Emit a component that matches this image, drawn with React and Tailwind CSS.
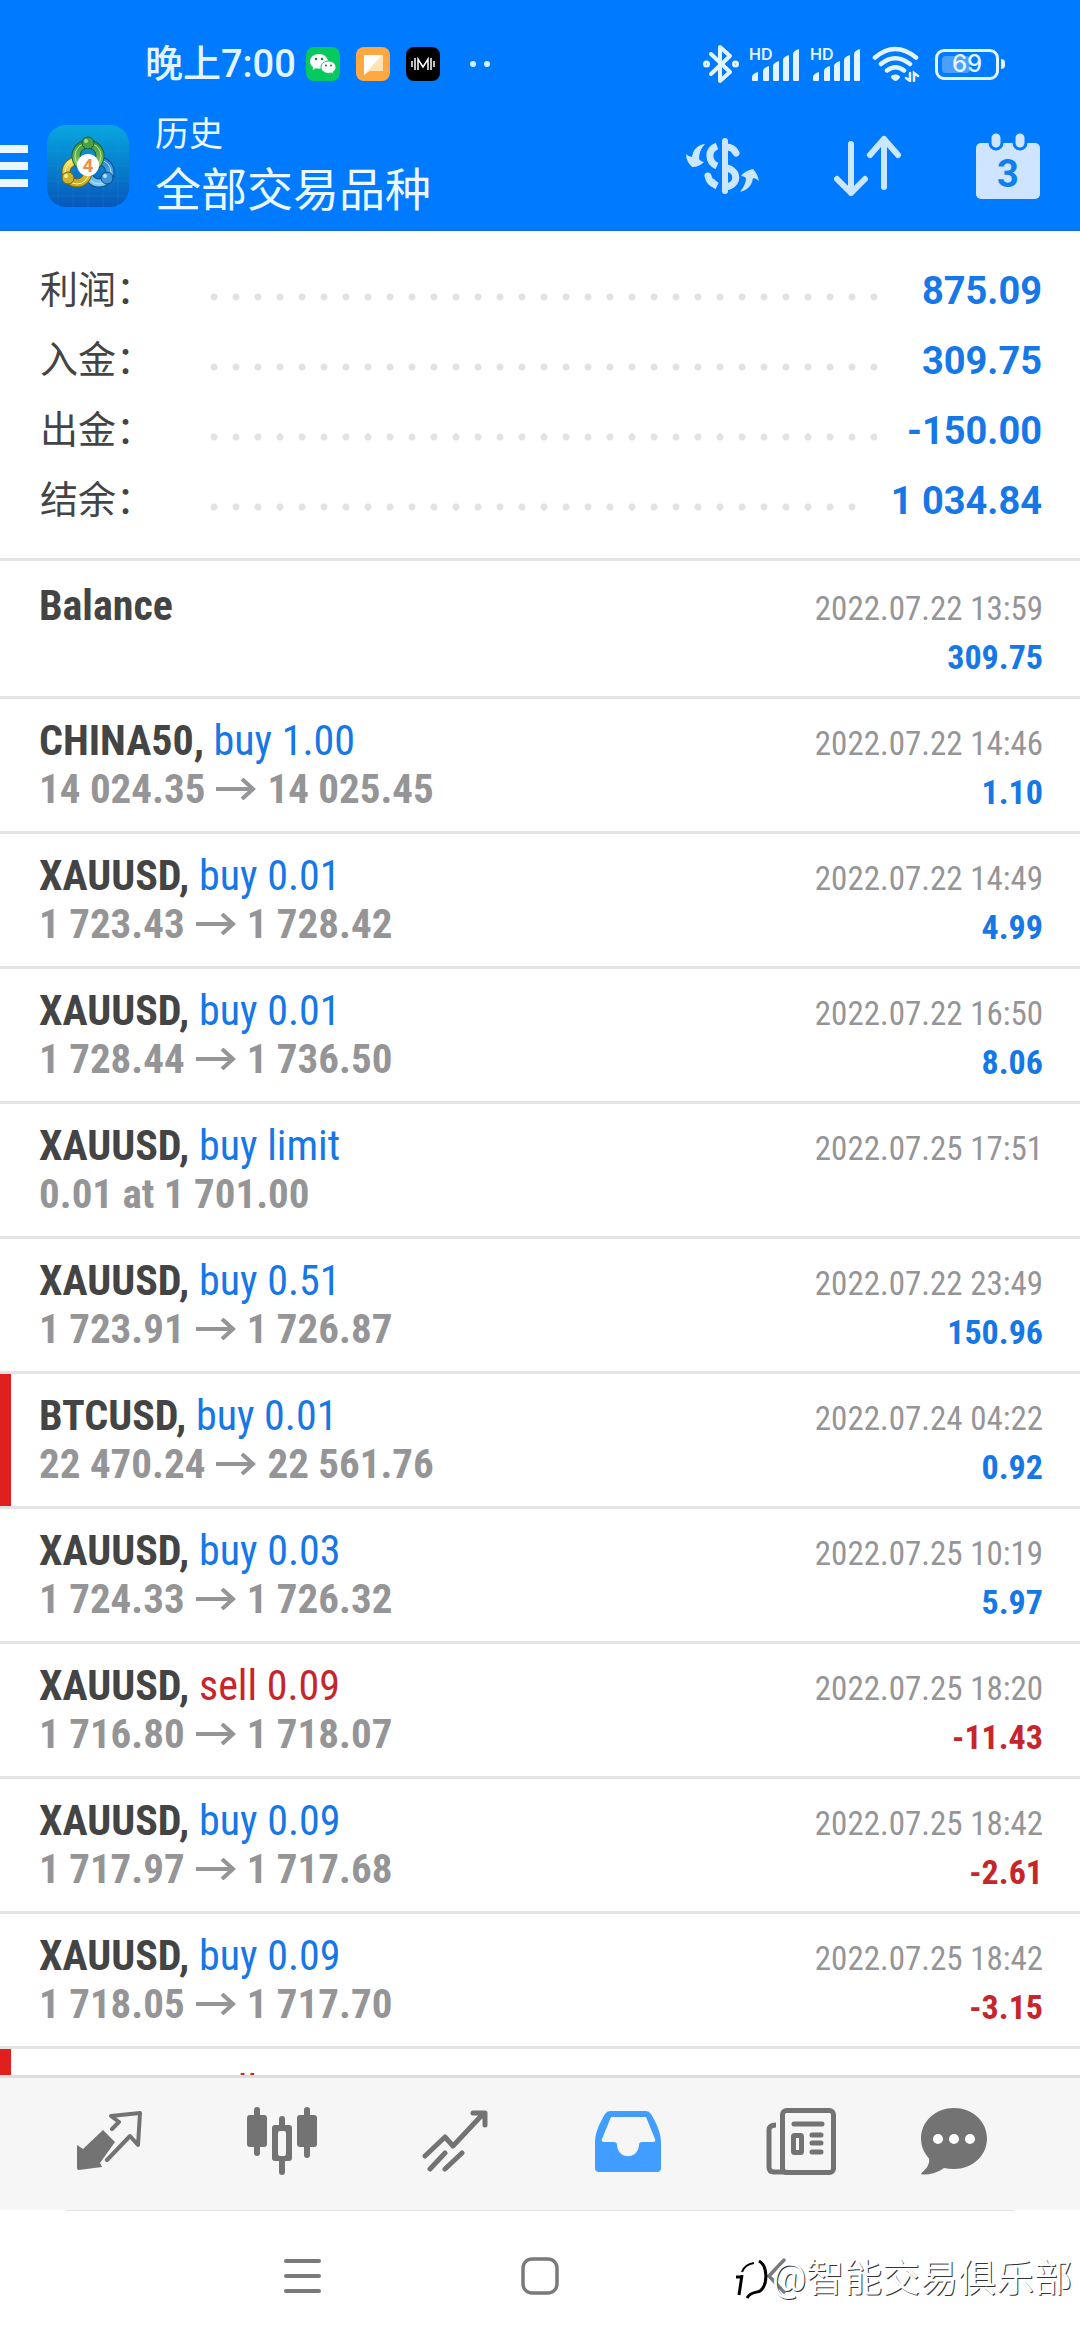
import React from 'react';

const summary = [
  { label: '利润：', value: '875.09' },
  { label: '入金：', value: '309.75' },
  { label: '出金：', value: '-150.00' },
  { label: '结余：', value: '1 034.84' },
];

const deals = [
  { symbol: 'Balance', time: '2022.07.22 13:59', profit: '309.75' },
  { symbol: 'CHINA50', side: 'buy', volume: '1.00', from: '14 024.35', to: '14 025.45', time: '2022.07.22 14:46', profit: '1.10' },
  { symbol: 'XAUUSD', side: 'buy', volume: '0.01', from: '1 723.43', to: '1 728.42', time: '2022.07.22 14:49', profit: '4.99' },
  { symbol: 'XAUUSD', side: 'buy', volume: '0.01', from: '1 728.44', to: '1 736.50', time: '2022.07.22 16:50', profit: '8.06' },
  { symbol: 'XAUUSD', side: 'buy', volume: 'limit', note: '0.01 at 1 701.00', time: '2022.07.25 17:51' },
  { symbol: 'XAUUSD', side: 'buy', volume: '0.51', from: '1 723.91', to: '1 726.87', time: '2022.07.22 23:49', profit: '150.96' },
  { symbol: 'BTCUSD', side: 'buy', volume: '0.01', from: '22 470.24', to: '22 561.76', time: '2022.07.24 04:22', profit: '0.92', marked: true },
  { symbol: 'XAUUSD', side: 'buy', volume: '0.03', from: '1 724.33', to: '1 726.32', time: '2022.07.25 10:19', profit: '5.97' },
  { symbol: 'XAUUSD', side: 'sell', volume: '0.09', from: '1 716.80', to: '1 718.07', time: '2022.07.25 18:20', profit: '-11.43' },
  { symbol: 'XAUUSD', side: 'buy', volume: '0.09', from: '1 717.97', to: '1 717.68', time: '2022.07.25 18:42', profit: '-2.61' },
  { symbol: 'XAUUSD', side: 'buy', volume: '0.09', from: '1 718.05', to: '1 717.70', time: '2022.07.25 18:42', profit: '-3.15' },
];

const Signal = () => (
  <svg className="overflow-visible" width="50" height="36" viewBox="0 0 50 36" fill="#e3f4ff">
    <text x="-1" y="14" fontSize="16" fontWeight="600" fontFamily="Inter, sans-serif">HD</text>
    <path d="M2 34v-3q0-3 6-5v8q0 1-1 1h-4q-1 0-1-1z" />
    <path d="M13 34v-9q0-3 6-5v14q0 1-1 1h-4q-1 0-1-1z" />
    <path d="M23 34v-14q0-3 6-5v19q0 1-1 1h-4q-1 0-1-1z" />
    <path d="M33 34v-20q0-3 6-5v25q0 1-1 1h-4q-1 0-1-1z" />
    <path d="M43 34v-26q0-3 6-5v31q0 1-1 1h-4q-1 0-1-1z" />
  </svg>
);

const StatusBar = () => (
  <div className="flex items-center h-32 pl-[145px] pr-[75px] text-[#e3f4ff]">
    <span className="text-[38px] leading-none font-medium">晚上7:00</span>
    <div className="flex items-center gap-4 ml-[10px]">
      <svg width="34" height="34" viewBox="0 0 34 34">
        <rect width="34" height="34" rx="8" fill="#06c95f" />
        <path d="M13 7C8 7 4 10 4 14.500c0 2.500 1.300 4.500 3.300 5.800L6.500 23l3.200-1.700c1 .3 2.200.4 3.300.4 5 0 9-3.300 9-7.200S18 7 13 7z" fill="#fff" />
        <path d="M22.500 14c-4.200 0-7.500 2.700-7.500 6.200s3.300 6.200 7.500 6.200c1 0 1.900-.1 2.700-.4l2.600 1.400-.7-2.300c1.800-1.200 2.900-2.900 2.900-4.900 0-3.500-3.300-6.200-7.500-6.200z" fill="#fff" stroke="#06c95f" />
        <g fill="#067d40">
          <circle cx="10" cy="12" r="1.200" />
          <circle cx="16" cy="12" r="1.200" />
          <circle cx="20" cy="18.500" r="1" />
          <circle cx="25" cy="18.500" r="1" />
        </g>
      </svg>
      <svg width="34" height="34" viewBox="0 0 34 34">
        <rect width="34" height="34" rx="8" fill="#ffa841" />
        <path d="M8 8h19v16H14l-6 4z" fill="#ffe3b5" />
        <path d="M8 8h18L8 28z" fill="#fff" />
      </svg>
      <svg width="34" height="34" viewBox="0 0 34 34">
        <rect width="34" height="34" rx="8" fill="#000" />
        <path d="M12 23V12l5 8 5-8v11M9 11v12M6 14v6M25 11v12M28 14v6" fill="none" stroke="#fff" strokeWidth="1.500" />
      </svg>
    </div>
    <svg className="ml-[29px]" width="22" height="8" viewBox="0 0 22 8" fill="#d4f0ff">
      <circle cx="4" cy="4" r="3" />
      <circle cx="18" cy="4" r="3" />
    </svg>
    <div className="flex items-center gap-[11px] ml-auto">
      <svg width="36" height="40" viewBox="0 0 36 40" fill="none" stroke="#e3f4ff" strokeWidth="4" strokeLinejoin="round" strokeLinecap="round">
        <path d="M8 10l19 18-10 9V3l10 9L8 30" />
        <circle cx="3.500" cy="20" r="1.500" />
        <circle cx="32.500" cy="20" r="1.500" />
      </svg>
      <Signal />
      <Signal />
      <svg width="48" height="36" viewBox="0 0 48 36" fill="none" stroke="#e3f4ff" strokeWidth="4.500" strokeLinecap="round">
        <path d="M3 11.500q20-17 41 0M9 18q14-11.500 29 0M15 24.500q8.500-6.500 17 0" />
        <path d="M23.500 28.500c3 0 4.500 1.500 4.500 2.500 0 1.500-3.500 4-4.500 4S19 32.500 19 31s1.500-2.500 4.500-2.500z" fill="#e3f4ff" stroke="none" />
        <path d="M38 27v8l-4-3M42 35v-8l4 3" strokeWidth="2.500" />
      </svg>
      <div className="flex items-center gap-[2px] ml-1">
        <div className="relative flex items-center justify-center w-16 h-[31px] rounded-[9px] border-[3px] border-[#e3f4ff]">
          <div className="absolute left-1 inset-y-1 w-7 rounded-sm bg-[#4aa0ff]" />
          <span className="relative text-[24px] leading-none font-['Inter',sans-serif] font-medium">69</span>
        </div>
        <div className="w-1 h-[10px] rounded-r bg-[#e3f4ff]" />
      </div>
    </div>
  </div>
);

const AppLogo = () => (
  <svg width="82" height="82" viewBox="0 0 82 82">
    <defs>
      <linearGradient id="tile" x1="0" y1="0" x2="0" y2="1">
        <stop offset="0" stopColor="#08a6e0" />
        <stop offset="1" stopColor="#0758bb" />
      </linearGradient>
      <linearGradient id="green" x1="0" y1="0" x2="0" y2="1">
        <stop offset="0" stopColor="#3f9a3c" />
        <stop offset="1" stopColor="#8fcf62" />
      </linearGradient>
      <linearGradient id="yellow" x1="0" y1="0" x2="0" y2="1">
        <stop offset="0" stopColor="#f3e565" />
        <stop offset="1" stopColor="#c9a924" />
      </linearGradient>
      <linearGradient id="sky" x1="0" y1="0" x2="0" y2="1">
        <stop offset="0" stopColor="#2a86d6" />
        <stop offset="1" stopColor="#7cc8f2" />
      </linearGradient>
    </defs>
    <rect width="82" height="82" rx="19" fill="url(#tile)" />
    <path d="M11 0v82M26 0v82M41 0v82M56 0v82M71 0v82M0 11h82M0 26h82M0 41h82M0 56h82M0 71h82" stroke="#27b7ec" strokeOpacity="0.150" />
    <circle cx="52" cy="47" r="11" fill="none" stroke="#0b4f86" strokeWidth="9" />
    <circle cx="52" cy="47" r="11" fill="none" stroke="url(#sky)" strokeWidth="7" />
    <circle cx="52" cy="47" r="12" fill="none" stroke="#b9e2fa" strokeWidth="1" />
    <circle cx="30" cy="47" r="11" fill="none" stroke="#6b6a20" strokeWidth="9" />
    <circle cx="30" cy="47" r="11" fill="none" stroke="url(#yellow)" strokeWidth="7" />
    <circle cx="30" cy="47" r="12" fill="none" stroke="#fbf5ab" strokeWidth="1" />
    <circle cx="41" cy="31" r="12" fill="none" stroke="#1c5f3a" strokeWidth="9" />
    <circle cx="41" cy="31" r="12" fill="none" stroke="url(#green)" strokeWidth="7" />
    <circle cx="41" cy="31" r="13" fill="none" stroke="#bfe59a" strokeWidth="1" />
    <circle cx="41" cy="18" r="6" fill="#4c9f43" stroke="#1c5f3a" />
    <circle cx="39" cy="16" r="2" fill="#a6dc86" />
    <circle cx="21" cy="53" r="6" fill="#cfb32c" stroke="#6b6a20" />
    <circle cx="19" cy="51" r="2" fill="#f7ec90" />
    <circle cx="60" cy="53" r="6" fill="#3d93dc" stroke="#0b4f86" />
    <circle cx="58" cy="51" r="2" fill="#b9e2fa" />
    <circle cx="41" cy="40" r="11" fill="#fff" />
    <text x="41" y="47" fontSize="19" fontWeight="700" textAnchor="middle" fill="#f08c4a" fontFamily="Roboto, sans-serif">4</text>
  </svg>
);

const Header = () => (
  <header className="bg-[#007bff] border-b border-[#0a6fd8]">
    <StatusBar />
    <div className="flex items-center pr-10 pb-[10px] -mt-4">
      <button aria-label="menu" className="flex flex-col gap-[9px] w-7">
        <span className="h-2 bg-[#ecf6ff]" />
        <span className="h-2 bg-[#ecf6ff]" />
        <span className="h-2 bg-[#ecf6ff]" />
      </button>
      <div className="ml-[19px]">
        <AppLogo />
      </div>
      <div className="ml-[26px] text-[#ecf8ff]">
        <div className="text-[34px] leading-[44px]">历史</div>
        <h1 className="mt-1 text-[46px] leading-[60px]">全部交易品种</h1>
      </div>
      <div className="flex items-center gap-[73px] ml-auto">
        <button aria-label="currency">
          <svg width="74" height="58" viewBox="0 0 74 58" fill="none" stroke="#cbe6ff" strokeWidth="6" strokeLinecap="round">
            <path d="M39 4v50" />
            <path d="M40 10c6 0 8 2 10 6M40 31c13 2 13 17 0 19M22 39c1 4 3 7 6 8" strokeWidth="7" />
            <path d="M31 9c-10 4-9 16 0 20M25 44c2 2 4 4 6 5" strokeWidth="7" strokeLinecap="butt" />
            <path d="M19 7C11 8 7 13 6 20q-3 0-6-3c0 5 2 9 6 13 5 0 9-2 12-5q-3 0-5-3c0-6 2-11 6-15zM54 55c8-2 12-7 13-14q3 0 6 3c-1-5-3-9-6-12-5 1-9 3-12 7q3 0 5 2c0 5-3 10-6 14z" fill="#cbe6ff" stroke="none" />
          </svg>
        </button>
        <button aria-label="sort">
          <svg width="70" height="62" viewBox="0 0 70 62" fill="none" stroke="#cbe6ff" strokeWidth="6" strokeLinecap="round" strokeLinejoin="round">
            <path d="M18 9v49M4 44l14 14 14-14M51 52V4M37 20L51 4l14 16" />
          </svg>
        </button>
        <button aria-label="calendar">
          <svg width="64" height="66" viewBox="0 0 64 66">
            <rect y="10" width="64" height="56" rx="5" fill="#cfe5ff" />
            <g fill="#cfe5ff" stroke="#007bff" strokeWidth="3">
              <rect x="14" y="-1" width="12" height="17" rx="6" />
              <rect x="38" y="-1" width="12" height="17" rx="6" />
            </g>
            <text x="32" y="54" fontSize="38" fontWeight="700" textAnchor="middle" fill="#0f7fee" fontFamily="Roboto, sans-serif">3</text>
          </svg>
        </button>
      </div>
    </div>
  </header>
);

const Summary = () => (
  <section className="pt-6 pb-[23px] border-b-[3px] border-[#e4e4e4]">
    {summary.map((row) => (
      <div key={row.label} className="flex items-center h-[70px] pl-10 pr-[38px]">
        <span className="w-[163px] text-[38px] leading-none text-[#444]">{row.label}</span>
        <span className="flex-1 h-2 mt-[14px] mr-[30px] bg-[radial-gradient(circle,#e2e2e2_3px,transparent_4px)] bg-[length:22px_8px] bg-repeat-x" />
        <span className="pt-[2px] text-[38px] leading-none font-bold text-[#1677e6]">{row.value}</span>
      </div>
    ))}
  </section>
);

const Arrow = () => (
  <svg className="mx-[11px]" width="40" height="22" viewBox="0 0 40 22" fill="none" stroke="#959597" strokeWidth="4">
    <path d="M0 11h37M26 1l11 10-11 10" />
  </svg>
);

const DealRow = ({ deal }) => {
  const loss = deal.profit && deal.profit.startsWith('-');

  return (
    <li className="relative flex justify-between h-[135px] pl-[39px] pr-[37px] pt-[18px] border-b-[3px] border-[#e4e4e4] font-['Roboto_Condensed','Liberation_Sans_Narrow',sans-serif]">
      {deal.marked && <span className="absolute left-0 inset-y-0 w-[11px] bg-[#e21f1f]" />}
      <div>
        <div className="text-[42px] leading-[48px] text-[#444]">
          <span className="font-bold">{deal.symbol}{deal.side && ','}</span>
          {deal.side && (
            <span className={deal.side === 'sell' ? 'text-[#c6262b]' : 'text-[#1677e6]'}> {deal.side} {deal.volume}</span>
          )}
        </div>
        <div className="flex items-center text-[41px] leading-[48px] font-bold text-[#959597]">
          {deal.note}
          {deal.from && (
            <>
              <span>{deal.from}</span>
              <Arrow />
              <span>{deal.to}</span>
            </>
          )}
        </div>
      </div>
      <div className="pt-[3px] text-right">
        <div className="text-[33px] leading-[48px] text-[#959597]">{deal.time}</div>
        <div className={loss ? 'text-[34px] leading-[48px] font-bold text-[#c6262b]' : 'text-[34px] leading-[48px] font-bold text-[#1677e6]'}>
          {deal.profit}
        </div>
      </div>
    </li>
  );
};

const TabBar = () => (
  <nav className="flex items-center h-[135px] pl-[22px] pr-[60px] pb-[6px] border-t-[3px] border-[#dedede] bg-[#f6f6f6] text-[#737373]">
    <button aria-label="quotes" className="flex-1 flex justify-center">
      <svg width="66" height="60" viewBox="0 0 66 60" fill="currentColor">
        <path d="M27 19l12 12-15 21 2 4-23 3q-2 0-2-2V34l6 4z" />
        <path d="M36 18l7-7-8-6 29-3-2 32-8-9-23 24" fill="none" stroke="currentColor" strokeWidth="4" strokeLinecap="round" strokeLinejoin="round" />
      </svg>
    </button>
    <button aria-label="charts" className="flex-1 flex justify-center">
      <svg width="70" height="68" viewBox="0 0 70 68" fill="currentColor">
        <rect y="8" width="20" height="32" rx="3" />
        <rect x="7" width="6" height="49" rx="3" />
        <path fillRule="evenodd" d="M28 18h14q3 0 3 3v30q0 3-3 3H28q-3 0-3-3V21q0-3 3-3zm5 6q-2 0-2 2v20q0 3 2 3h4q2 0 2-3V26q0-2-2-2z" />
        <path d="M32 19v-7q0-3 3-3t3 3v7zM32 53v12q0 3 3 3t3-3V53z" />
        <rect x="50" y="8" width="20" height="32" rx="3" />
        <rect x="57" width="6" height="51" rx="3" />
      </svg>
    </button>
    <button aria-label="trade" className="flex-1 flex justify-center">
      <svg width="66" height="62" viewBox="0 0 66 62" fill="none" stroke="currentColor" strokeWidth="5" strokeLinecap="round" strokeLinejoin="round">
        <path d="M3 46l20-19 8 9L61 4M51 3h12v12M8 59l15-16M23 59l17-16" />
      </svg>
    </button>
    <button aria-label="history" className="flex-1 flex justify-center">
      <svg width="66" height="61" viewBox="0 0 66 61">
        <path fillRule="evenodd" fill="#419dff" d="M15 0h36q3 0 5 3c7 12 10 20 10 29v25q0 4-4 4H4q-4 0-4-4V32C0 23 3 15 10 3q2-3 5-3zm1 6L7 28q-1 3 2 3h10q3 0 3 3c1 15 21 15 22 0q0-3 3-3h11q3 0 2-3L51 6z" />
      </svg>
    </button>
    <button aria-label="news" className="flex-1 flex justify-center">
      <svg width="70" height="67" viewBox="0 0 70 67" fill="none" stroke="currentColor" strokeWidth="5">
        <rect x="16.500" y="2.500" width="51" height="62" rx="4" />
        <path d="M10 17q-7 0-7 5v37q0 5 5 5h12" />
        <path d="M28 16h28M46 27h9M46 35h9M46 44h9" strokeLinecap="round" />
        <rect x="27.500" y="27.500" width="8" height="17" rx="1" />
      </svg>
    </button>
    <button aria-label="messages" className="w-[133px] flex justify-center">
      <svg width="66" height="67" viewBox="0 0 66 67" fill="currentColor">
        <path d="M33 0c18 0 33 13 33 30.500S51 61 33 61q-5 0-10-1C16 65 8 67 1 66.500c-1 0-1-1 0-2 5-4 8-9 7-14C3 45 0 38 0 30.500 0 13 15 0 33 0z" />
        <g fill="#fff">
          <circle cx="17" cy="31" r="5" />
          <circle cx="33" cy="31" r="5" />
          <circle cx="49" cy="31" r="5" />
        </g>
      </svg>
    </button>
  </nav>
);

const SystemNav = () => (
  <div className="relative h-[130px] bg-white">
    <div className="mx-[66px] h-px bg-[#e2e2e2]" />
    <div className="flex items-center h-[129px] pl-[284px] text-[#7a7a7a]">
      <svg width="37" height="36" viewBox="0 0 37 36" stroke="currentColor" strokeWidth="4" strokeLinecap="round">
        <path d="M2 3h33M2 18h33M2 33h33" />
      </svg>
      <svg className="ml-[200px]" width="38" height="38" viewBox="0 0 38 38" fill="none" stroke="currentColor" strokeWidth="3.500">
        <rect x="2" y="2" width="34" height="34" rx="9" />
      </svg>
      <svg className="ml-[208px]" width="20" height="36" viewBox="0 0 20 36" fill="none" stroke="currentColor" strokeWidth="3.500" strokeLinecap="round">
        <path d="M17 2L2 18l15 16" />
      </svg>
    </div>
    <div className="absolute right-2 top-1 h-[129px] flex items-center text-[38px] text-white [text-shadow:1px_1px_0_#333]">
      <svg width="37" height="48" viewBox="0 0 37 48" fill="none" stroke="#000">
        <path d="M1 22h6M7 20L4 40" strokeWidth="3" />
        <path d="M7 17C9 11 13 9 19 8" strokeWidth="2" />
        <path d="M24 6c9 5 9 24 1 30-3 2-9 0-13 7" strokeWidth="3" />
      </svg>
      @智能交易俱乐部
    </div>
  </div>
);

const App = () => {
  return (
    <div className="flex flex-col h-screen overflow-hidden bg-white font-['Roboto','Noto_Sans_CJK_SC',sans-serif]">
      <Header />
      <Summary />
      <ul className="flex-1 min-h-0 overflow-hidden pt-[3px]">
        {deals.map((deal, i) => (
          <DealRow key={i} deal={deal} />
        ))}
        <DealRow deal={{ symbol: 'XAUUSD', side: 'sell', volume: '0.09', marked: true }} />
      </ul>
      <TabBar />
      <SystemNav />
    </div>
  );
};

export default App;
